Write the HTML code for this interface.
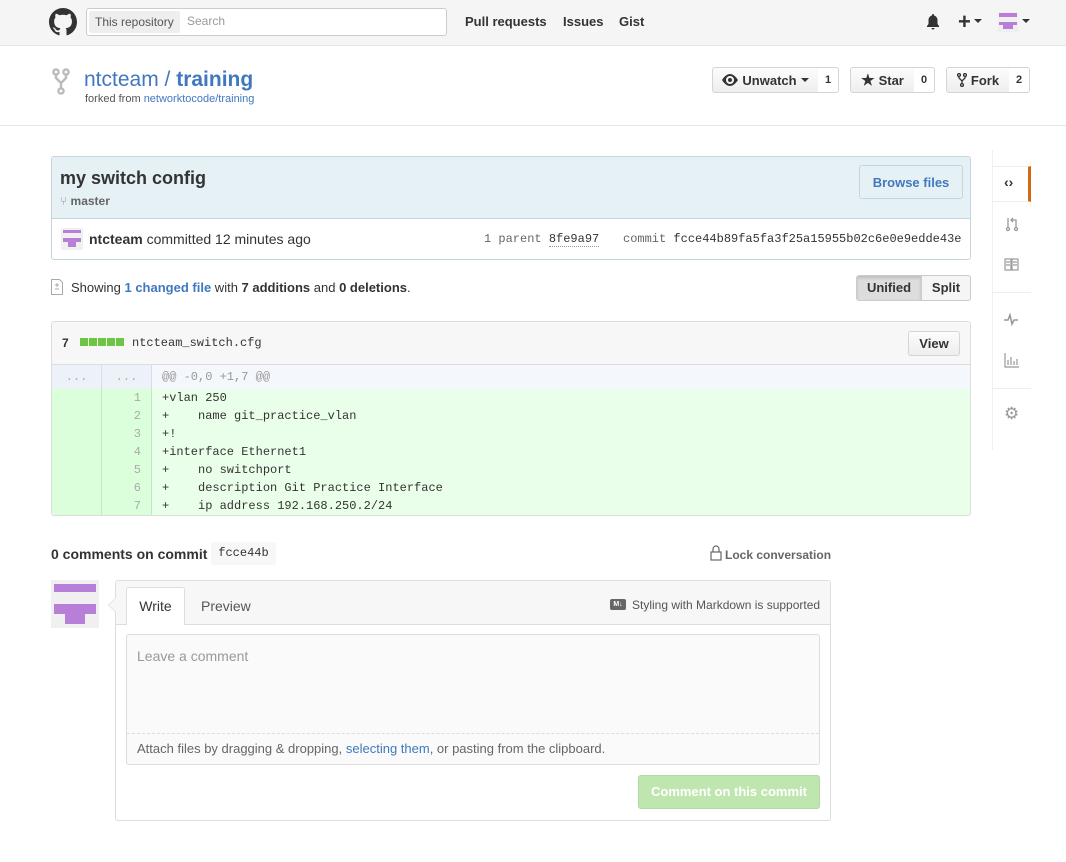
<!DOCTYPE html>
<html><head><meta charset="utf-8"><style>
*{box-sizing:border-box;margin:0;padding:0}
body{width:1066px;height:862px;background:#fff;font-family:"Liberation Sans",Arial,sans-serif;font-size:13px;color:#333;position:relative;overflow:hidden}
.a{position:absolute}
.mono{font-family:"Liberation Mono",monospace}
.btn{position:absolute;border:1px solid #d5d5d5;border-radius:3px;background:linear-gradient(#fcfcfc,#eee);font-weight:bold;font-size:13px;color:#333;display:flex;align-items:center;justify-content:center}
.cnt{position:absolute;border:1px solid #d5d5d5;border-left:none;border-radius:0 3px 3px 0;background:#fff;font-weight:bold;font-size:11px;display:flex;align-items:center;justify-content:center}
.ln{position:absolute;left:0;width:919px;height:18px;font-family:"Liberation Mono",monospace;font-size:12px;line-height:18px}
.ln .n1{position:absolute;left:0;width:50px;height:18px;background:#dbffdb;border-right:1px solid #c1e9c1}
.ln .n2{position:absolute;left:50px;width:50px;height:18px;background:#dbffdb;border-right:1px solid #c1e9c1;text-align:right;padding-right:10px;color:#aaa}
.ln .c{position:absolute;left:110px;white-space:pre;color:#333}
</style></head><body>
<!-- header -->
<div class="a" style="left:0;top:0;width:1066px;height:46px;background:#f5f5f5;border-bottom:1px solid #e5e5e5"></div>
<svg class="a" style="left:49px;top:8px" width="28" height="28" viewBox="0 0 16 16"><path fill="#333" d="M8 0C3.58 0 0 3.58 0 8c0 3.54 2.290 6.530 5.470 7.590.4.07.55-.17.55-.38 0-.19-.01-.82-.01-1.49-2.01.37-2.53-.49-2.69-.94-.09-.23-.48-.94-.82-1.13-.28-.15-.68-.52-.01-.53.63-.01 1.08.58 1.23.82.72 1.21 1.87.87 2.33.66.07-.52.28-.87.51-1.07-1.78-.2-3.64-.89-3.64-3.95 0-.87.31-1.59.82-2.15-.08-.2-.36-1.02.08-2.12 0 0 .67-.21 2.2.82.64-.18 1.32-.27 2-.27.68 0 1.36.09 2 .27 1.53-1.04 2.2-.82 2.2-.82.44 1.1.16 1.92.08 2.12.51.56.82 1.27.82 2.15 0 3.07-1.87 3.75-3.65 3.95.29.25.54.73.54 1.48 0 1.07-.01 1.93-.01 2.2 0 .21.15.46.55.38A8.013 8.013 0 0016 8c0-4.42-3.58-8-8-8z"/></svg>
<div class="a" style="left:86px;top:8px;width:361px;height:28px;border:1px solid #ccc;border-radius:3px;background:#fff"></div>
<div class="a" style="left:89px;top:11px;width:91px;height:22px;background:#eee;border-radius:2px;font-size:12px;color:#555;line-height:22px;padding-left:6px">This repository</div>
<div class="a" style="left:187px;top:14px;font-size:12px;color:#999">Search</div>
<div class="a" style="left:465px;top:14px;font-weight:bold;font-size:13px">Pull requests</div>
<div class="a" style="left:563px;top:14px;font-weight:bold;font-size:13px">Issues</div>
<div class="a" style="left:619px;top:14px;font-weight:bold;font-size:13px">Gist</div>
<svg class="a" style="left:925px;top:13px" width="16" height="18" viewBox="0 0 16 18"><path fill="#333" d="M8 1c-.6 0-1 .4-1 1v.5C4.8 3 3.5 5 3.5 7v4L2 13v1h12v-1l-1.5-2V7c0-2-1.3-4-3.5-4.5V2c0-.6-.4-1-1-1zM6.5 15h3a1.5 1.5 0 01-3 0z"/></svg>
<div class="a" style="left:958px;top:9px;font-size:22px;font-weight:bold;color:#333">+</div>
<div class="a" style="left:974px;top:19px;border:4px solid transparent;border-top-color:#333"></div>
<svg class="a" style="left:998px;top:12px" width="20" height="20"><rect width="20" height="20" fill="#f0f0f0"/><rect x="1" y="1" width="18" height="4" fill="#b87fd9"/><rect x="1" y="10" width="18" height="3" fill="#b87fd9"/><rect x="5" y="13" width="10" height="4" fill="#b87fd9"/></svg>
<div class="a" style="left:1022px;top:19px;border:4px solid transparent;border-top-color:#333"></div>
<!-- repo head -->
<svg class="a" style="left:52px;top:68px" width="18" height="28" viewBox="0 0 18 28"><g fill="none" stroke="#bbb" stroke-width="2.4"><circle cx="4" cy="4" r="2.6"/><circle cx="14" cy="4" r="2.6"/><circle cx="9" cy="23" r="2.6"/><path d="M4 7v3l5 5 5-5V7M9 15v5"/></g></svg>
<div class="a" style="left:84px;top:68px;font-size:21px;color:#4078c0">ntcteam / <b>training</b></div>
<div class="a" style="left:85px;top:93px;font-size:11px;color:#555">forked from <span style="color:#4078c0">networktocode/training</span></div>
<div class="btn" style="left:712px;top:67px;width:107px;height:26px;border-radius:3px 0 0 3px"><svg width="16" height="12" viewBox="0 0 16 12" style="margin-right:4px"><path fill="#333" d="M8 0C3.5 0 0 6 0 6s3.5 6 8 6 8-6 8-6-3.5-6-8-6zm0 10a4 4 0 110-8 4 4 0 010 8zm0-6a2 2 0 100 4 2 2 0 000-4z"/></svg>Unwatch<span style="margin-left:4px;border:4px solid transparent;border-top-color:#333;margin-top:4px"></span></div>
<div class="cnt" style="left:818px;top:67px;width:21px;height:26px">1</div>
<div class="btn" style="left:850px;top:67px;width:65px;height:26px;border-radius:3px 0 0 3px"><span style="font-size:15px;margin-right:4px">★</span>Star</div>
<div class="cnt" style="left:914px;top:67px;width:21px;height:26px">0</div>
<div class="btn" style="left:946px;top:67px;width:64px;height:26px;border-radius:3px 0 0 3px"><svg width="10" height="14" viewBox="0 0 10 14" style="margin-right:4px"><g fill="none" stroke="#333" stroke-width="1.3"><circle cx="2" cy="2" r="1.4"/><circle cx="8" cy="2" r="1.4"/><circle cx="5" cy="12" r="1.4"/><path d="M2 3.5v1.5l3 3 3-3V3.5M5 8v2.5"/></g></svg>Fork</div>
<div class="cnt" style="left:1009px;top:67px;width:21px;height:26px">2</div>
<div class="a" style="left:0;top:125px;width:1066px;height:1px;background:#e5e5e5"></div>
<!-- sidebar -->
<div class="a" style="left:993px;top:150px;width:38px;height:300px;background:#fff;box-shadow:-1px 0 0 #f0f0f0"></div>
<div class="a" style="left:993px;top:166px;width:38px;height:36px;background:#fff;border-right:3px solid #d26911;border-top:1px solid #eee;border-bottom:1px solid #eee"></div>
<div class="a" style="left:1004px;top:174px;font-weight:bold;font-size:14px;color:#333">‹›</div>
<svg class="a" style="left:1005px;top:216px" width="14" height="16" viewBox="0 0 14 16"><g fill="none" stroke="#999" stroke-width="1.3"><circle cx="3" cy="13" r="1.5"/><circle cx="11" cy="13" r="1.5"/><path d="M3 11V2M11 11V4H7M8 2L6 4l2 2"/></g></svg>
<svg class="a" style="left:1004px;top:258px" width="16" height="14"><g fill="none" stroke="#999" stroke-width="1.2"><rect x="1" y="1" width="6" height="11"/><rect x="8" y="1" width="6" height="11"/><path d="M2 4h4M2 7h4M9 4h4M9 7h4"/></g></svg>
<div class="a" style="left:993px;top:292px;width:38px;height:1px;background:#eee"></div>
<svg class="a" style="left:1004px;top:313px" width="16" height="14"><path d="M0 7h4l2-5 2 9 2-4h4" fill="none" stroke="#999" stroke-width="1.6"/></svg>
<svg class="a" style="left:1004px;top:352px" width="16" height="16"><path d="M1 1v14h14M4 13V8M7 13V5M10 13V9M13 13V7" fill="none" stroke="#999" stroke-width="1.2"/></svg>
<div class="a" style="left:993px;top:388px;width:38px;height:1px;background:#eee"></div>
<div class="a" style="left:1004px;top:404px;font-size:17px;color:#999">⚙</div>
<!-- commit box -->
<div class="a" style="left:51px;top:156px;width:920px;height:104px;border:1px solid #c5d5dd;border-radius:3px;background:#fff;overflow:hidden">
 <div class="a" style="left:0;top:0;width:918px;height:62px;background:#e6f1f6;border-bottom:1px solid #c5d5dd"></div>
</div>
<div class="a" style="left:60px;top:168px;font-size:18px;font-weight:bold;color:#333">my switch config</div>
<div class="a" style="left:60px;top:194px;font-size:12px;font-weight:bold;color:#666"><span style="color:#999;font-weight:normal">⑂</span> master</div>
<div class="a" style="left:859px;top:165px;width:104px;height:34px;border:1px solid #c5d5dd;border-radius:3px;background:#e6f1f6;color:#4078c0;font-weight:bold;font-size:13px;display:flex;align-items:center;justify-content:center">Browse files</div>
<svg class="a" style="left:61px;top:228px" width="22" height="22"><rect width="22" height="22" fill="#f0f0f0"/><rect x="2" y="2" width="18" height="3" fill="#b87fd9"/><rect x="2" y="10" width="18" height="4" fill="#b87fd9"/><rect x="7" y="14" width="8" height="5" fill="#b87fd9"/></svg>
<div class="a" style="left:89px;top:231px;font-size:14px"><b>ntcteam</b> committed 12 minutes ago</div>
<div class="a mono" style="left:484px;top:232px;font-size:12px;color:#666">1 parent <span style="color:#333;border-bottom:1px dotted #999">8fe9a97</span></div>
<div class="a mono" style="left:623px;top:232px;font-size:12px;color:#666">commit <span style="color:#333">fcce44b89fa5fa3f25a15955b02c6e0e9edde43e</span></div>
<!-- showing -->
<svg class="a" style="left:51px;top:279px" width="12" height="16"><g fill="none" stroke="#aaa"><path d="M.5.5h8l3 3v12H.5z"/><path d="M4 6h4M6 4v4M4 10h4"/></g></svg>
<div class="a" style="left:71px;top:280px;font-size:13px">Showing <b style="color:#4078c0">1 changed file</b> with <b>7 additions</b> and <b>0 deletions</b>.</div>
<div class="a" style="left:856px;top:275px;width:115px;height:26px;border:1px solid #ccc;border-radius:3px;background:#f5f5f5;overflow:hidden">
 <div class="a" style="left:0;top:0;width:65px;height:24px;background:#ddd;box-shadow:inset 0 2px 3px rgba(0,0,0,.15);border-right:1px solid #ccc;font-weight:bold;text-align:center;line-height:24px">Unified</div>
 <div class="a" style="left:65px;top:0;width:48px;height:24px;font-weight:bold;text-align:center;line-height:24px">Split</div>
</div>
<!-- file -->
<div class="a" style="left:51px;top:321px;width:920px;height:195px;border:1px solid #ddd;border-radius:3px;overflow:hidden;background:#eaffea">
 <div class="a" style="left:0;top:0;width:918px;height:43px;background:#f7f7f7;border-bottom:1px solid #ddd"></div>
 <div class="a" style="left:10px;top:14px;font-weight:bold;font-size:12px">7</div>
 <div class="a" style="left:28px;top:16px;width:44px;height:8px;background:repeating-linear-gradient(90deg,#6cc644 0 8px,transparent 8px 9px)"></div>
 <div class="a mono" style="left:80px;top:14px;font-size:12px">ntcteam_switch.cfg</div>
 <div class="a" style="left:856px;top:9px;width:52px;height:25px;border:1px solid #d5d5d5;border-radius:3px;background:linear-gradient(#fcfcfc,#eee);font-weight:bold;text-align:center;line-height:23px">View</div>
 <div class="a" style="left:0;top:43px;width:918px;height:24px;background:#f4f7fb;font-family:'Liberation Mono',monospace;font-size:12px;line-height:24px;color:#aaa">
  <div class="a" style="left:0;width:50px;height:24px;background:#edf2f9;border-right:1px solid #d2dff0;text-align:center">...</div>
  <div class="a" style="left:50px;width:50px;height:24px;background:#edf2f9;border-right:1px solid #d2dff0;text-align:center">...</div>
  <div class="a" style="left:110px;color:#999">@@ -0,0 +1,7 @@</div>
 </div>
 <div class="ln" style="top:67px"><div class="n1"></div><div class="n2">1</div><div class="c">+vlan 250</div></div>
 <div class="ln" style="top:85px"><div class="n1"></div><div class="n2">2</div><div class="c">+    name git_practice_vlan</div></div>
 <div class="ln" style="top:103px"><div class="n1"></div><div class="n2">3</div><div class="c">+!</div></div>
 <div class="ln" style="top:121px"><div class="n1"></div><div class="n2">4</div><div class="c">+interface Ethernet1</div></div>
 <div class="ln" style="top:139px"><div class="n1"></div><div class="n2">5</div><div class="c">+    no switchport</div></div>
 <div class="ln" style="top:157px"><div class="n1"></div><div class="n2">6</div><div class="c">+    description Git Practice Interface</div></div>
 <div class="ln" style="top:175px"><div class="n1"></div><div class="n2">7</div><div class="c">+    ip address 192.168.250.2/24</div></div>
</div>
<!-- comments -->
<div class="a" style="left:51px;top:546px;font-size:14px;font-weight:bold">0 comments on commit</div>
<div class="a mono" style="left:211px;top:542px;width:65px;height:23px;background:#f7f7f7;border-radius:3px;font-size:12px;line-height:23px;text-align:center">fcce44b</div>
<svg class="a" style="left:710px;top:545px" width="12" height="16"><g fill="none" stroke="#666" stroke-width="1.2"><rect x="1" y="7" width="10" height="8"/><path d="M3 7V4a3 3 0 016 0v3"/></g></svg>
<div class="a" style="left:725px;top:548px;font-size:12px;font-weight:bold;color:#666">Lock conversation</div>
<svg class="a" style="left:51px;top:580px" width="48" height="48"><rect width="48" height="48" fill="#f0f0f0"/><rect x="3" y="4" width="42" height="8" fill="#b87fd9"/><rect x="3" y="24" width="42" height="10" fill="#b87fd9"/><rect x="14" y="34" width="20" height="10" fill="#b87fd9"/></svg>
<div class="a" style="left:115px;top:580px;width:716px;height:241px;border:1px solid #ddd;border-radius:3px;background:#fff">
 <div class="a" style="left:0;top:0;width:714px;height:44px;background:#f7f7f7;border-bottom:1px solid #ddd"></div>
</div>
<div class="a" style="left:108px;top:597px;width:0;height:0;border:8px solid transparent;border-right-color:#ddd;border-left:none"></div>
<div class="a" style="left:109px;top:597px;width:0;height:0;border:8px solid transparent;border-right-color:#f7f7f7;border-left:none"></div>
<div class="a" style="left:126px;top:587px;width:59px;height:38px;background:#fff;border:1px solid #ddd;border-bottom:none;border-radius:3px 3px 0 0;font-size:14px;text-align:center;line-height:36px">Write</div>
<div class="a" style="left:201px;top:598px;font-size:14px;color:#555">Preview</div>
<div class="a" style="left:610px;top:599px;width:16px;height:11px;background:#666;border-radius:2px;color:#fff;font-size:7px;font-weight:bold;line-height:11px;text-align:center">M↓</div>
<div class="a" style="left:632px;top:598px;font-size:12px;color:#555">Styling with Markdown is supported</div>
<div class="a" style="left:126px;top:634px;width:694px;height:131px;border:1px solid #ddd;border-radius:3px;background:#fafafa">
 <div class="a" style="left:0;top:98px;width:692px;border-top:1px dashed #ddd"></div>
</div>
<div class="a" style="left:137px;top:648px;font-size:14px;color:#999">Leave a comment</div>
<div class="a" style="left:137px;top:741px;font-size:13px;color:#666">Attach files by dragging &amp; dropping, <span style="color:#4078c0">selecting them</span>, or pasting from the clipboard.</div>
<div class="a" style="left:638px;top:775px;width:182px;height:34px;background:#c0e6b0;border:1px solid #b0daa0;border-radius:3px;color:#fff;font-weight:bold;font-size:13px;text-align:center;line-height:32px">Comment on this commit</div>
</body></html>
